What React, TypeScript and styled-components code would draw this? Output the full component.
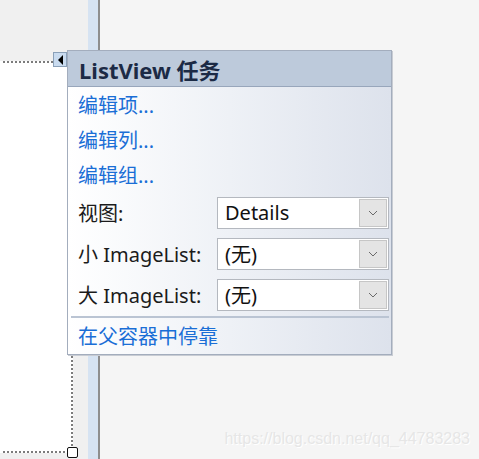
import styled, { createGlobalStyle } from 'styled-components';

const GlobalStyle = createGlobalStyle`
  html, body {
    margin: 0;
    padding: 0;
    background: #f5f5f5;
  }
  body {
    font-family: "Noto Sans", "Noto Sans CJK SC", sans-serif;
  }
`;

const Page = styled.div`
  position: relative;
  width: 479px;
  height: 459px;
  overflow: hidden;
  display: grid;
  grid-template-columns: 88px 10px 2px 1fr;
  background: #f5f5f5;
`;

const Designer = styled.div`
  display: flex;
  flex-direction: column;
  background: #f0f0f0;
`;

const DesignerTop = styled.div`
  height: 61px;
`;

const ControlRow = styled.div`
  display: flex;
  height: 392px;
`;

const SelectedControl = styled.div`
  position: relative;
  width: 73px;
  margin-left: -2px;
  background: #ffffff;
  border: 2px dotted #7c7c7c;
  border-left: none;
`;

const Handle = styled.div`
  position: absolute;
  right: -7px;
  bottom: -7px;
  width: 9px;
  height: 9px;
  background: #ffffff;
  border: 1px solid #111;
  border-radius: 2px;
`;

const Stripe = styled.div`
  background: #d6e3f2;
`;

const Splitter = styled.div`
  background: #8e8e8e;
`;

const Canvas = styled.div`
  display: flex;
  align-items: flex-end;
  justify-content: flex-end;
  padding: 0 9px 11px 0;
`;

const Watermark = styled.span`
  font-family: "Liberation Sans", Arial, sans-serif;
  font-size: 16px;
  color: #e6e6e6;
  text-shadow: 1px 1px 0 #ffffff;
`;

const TagButton = styled.div`
  position: absolute;
  left: 53px;
  top: 52px;
  width: 14px;
  height: 15px;
  box-sizing: border-box;
  background: #c9dbef;
  border: 1px solid #8aa0b8;
  display: flex;
  align-items: center;
  justify-content: center;
`;

const Arrow = styled.span`
  width: 0;
  height: 0;
  border-top: 5px solid transparent;
  border-bottom: 5px solid transparent;
  border-right: 5px solid #000;
`;

const Panel = styled.div`
  position: absolute;
  left: 67px;
  top: 50px;
  width: 325px;
  height: 305px;
  box-sizing: border-box;
  border: 1px solid #a3adbd;
  background: linear-gradient(to right, #ffffff 0%, #eef1f6 50%, #dde2ec 100%);
  display: flex;
  flex-direction: column;
  box-shadow: 1px 1px 0 #c8ccd3;
`;

const Header = styled.div`
  height: 36px;
  flex-shrink: 0;
  box-sizing: border-box;
  background: #bdcadb;
  border-bottom: 1px solid #98a6bb;
  display: flex;
  align-items: center;
  padding-left: 11px;
  font-size: 22px;
  font-weight: 700;
  color: #1c2a45;
`;

const Body = styled.div`
  display: flex;
  flex-direction: column;
  padding: 0 2px 0 10px;
`;

const LinkRow = styled.div`
  height: 35px;
  display: flex;
  align-items: center;
  font-size: 20px;
  color: #1a6ed6;
`;

const FieldRow = styled.div`
  height: 41px;
  display: flex;
  align-items: center;
  justify-content: space-between;
`;

const Label = styled.span`
  font-size: 20px;
  color: #1b1b1b;
`;

const Select = styled.div`
  width: 172px;
  height: 32px;
  box-sizing: border-box;
  border: 1px solid #b4b8bf;
  background: #ffffff;
  display: flex;
  align-items: center;
  justify-content: space-between;
  padding: 1px;
`;

const SelectValue = styled.span`
  padding-left: 6px;
  font-size: 20px;
  color: #111;
`;

const DropButton = styled.div`
  width: 28px;
  height: 28px;
  box-sizing: border-box;
  background: #e4e4e4;
  border: 1px solid #c6c6c6;
  display: flex;
  align-items: center;
  justify-content: center;
`;

const Separator = styled.div`
  height: 2px;
  margin: 1px 0 0 -7px;
  background: #bac4d3;
`;

const DockRow = styled(LinkRow)`
  height: 34px;
`;

function Chevron() {
  return (
    <svg width="10" height="6" viewBox="0 0 10 6">
      <path d="M1 1 L5 5 L9 1" fill="none" stroke="#6a6a6a" strokeWidth="1" />
    </svg>
  );
}

const fields = [
  { label: '视图:', value: 'Details' },
  { label: '小 ImageList:', value: '(无)' },
  { label: '大 ImageList:', value: '(无)' },
];

export default function App() {
  return (
    <Page>
      <GlobalStyle />
      <Designer>
        <DesignerTop />
        <ControlRow>
          <SelectedControl>
            <Handle />
          </SelectedControl>
        </ControlRow>
      </Designer>
      <Stripe />
      <Splitter />
      <Canvas>
        <Watermark>https://blog.csdn.net/qq_44783283</Watermark>
      </Canvas>

      <TagButton>
        <Arrow />
      </TagButton>

      <Panel>
        <Header>ListView 任务</Header>
        <Body>
          <LinkRow>编辑项...</LinkRow>
          <LinkRow>编辑列...</LinkRow>
          <LinkRow>编辑组...</LinkRow>
          {fields.map(f => (
            <FieldRow key={f.label}>
              <Label>{f.label}</Label>
              <Select>
                <SelectValue>{f.value}</SelectValue>
                <DropButton>
                  <Chevron />
                </DropButton>
              </Select>
            </FieldRow>
          ))}
          <Separator />
          <DockRow>在父容器中停靠</DockRow>
        </Body>
      </Panel>
    </Page>
  );
}
